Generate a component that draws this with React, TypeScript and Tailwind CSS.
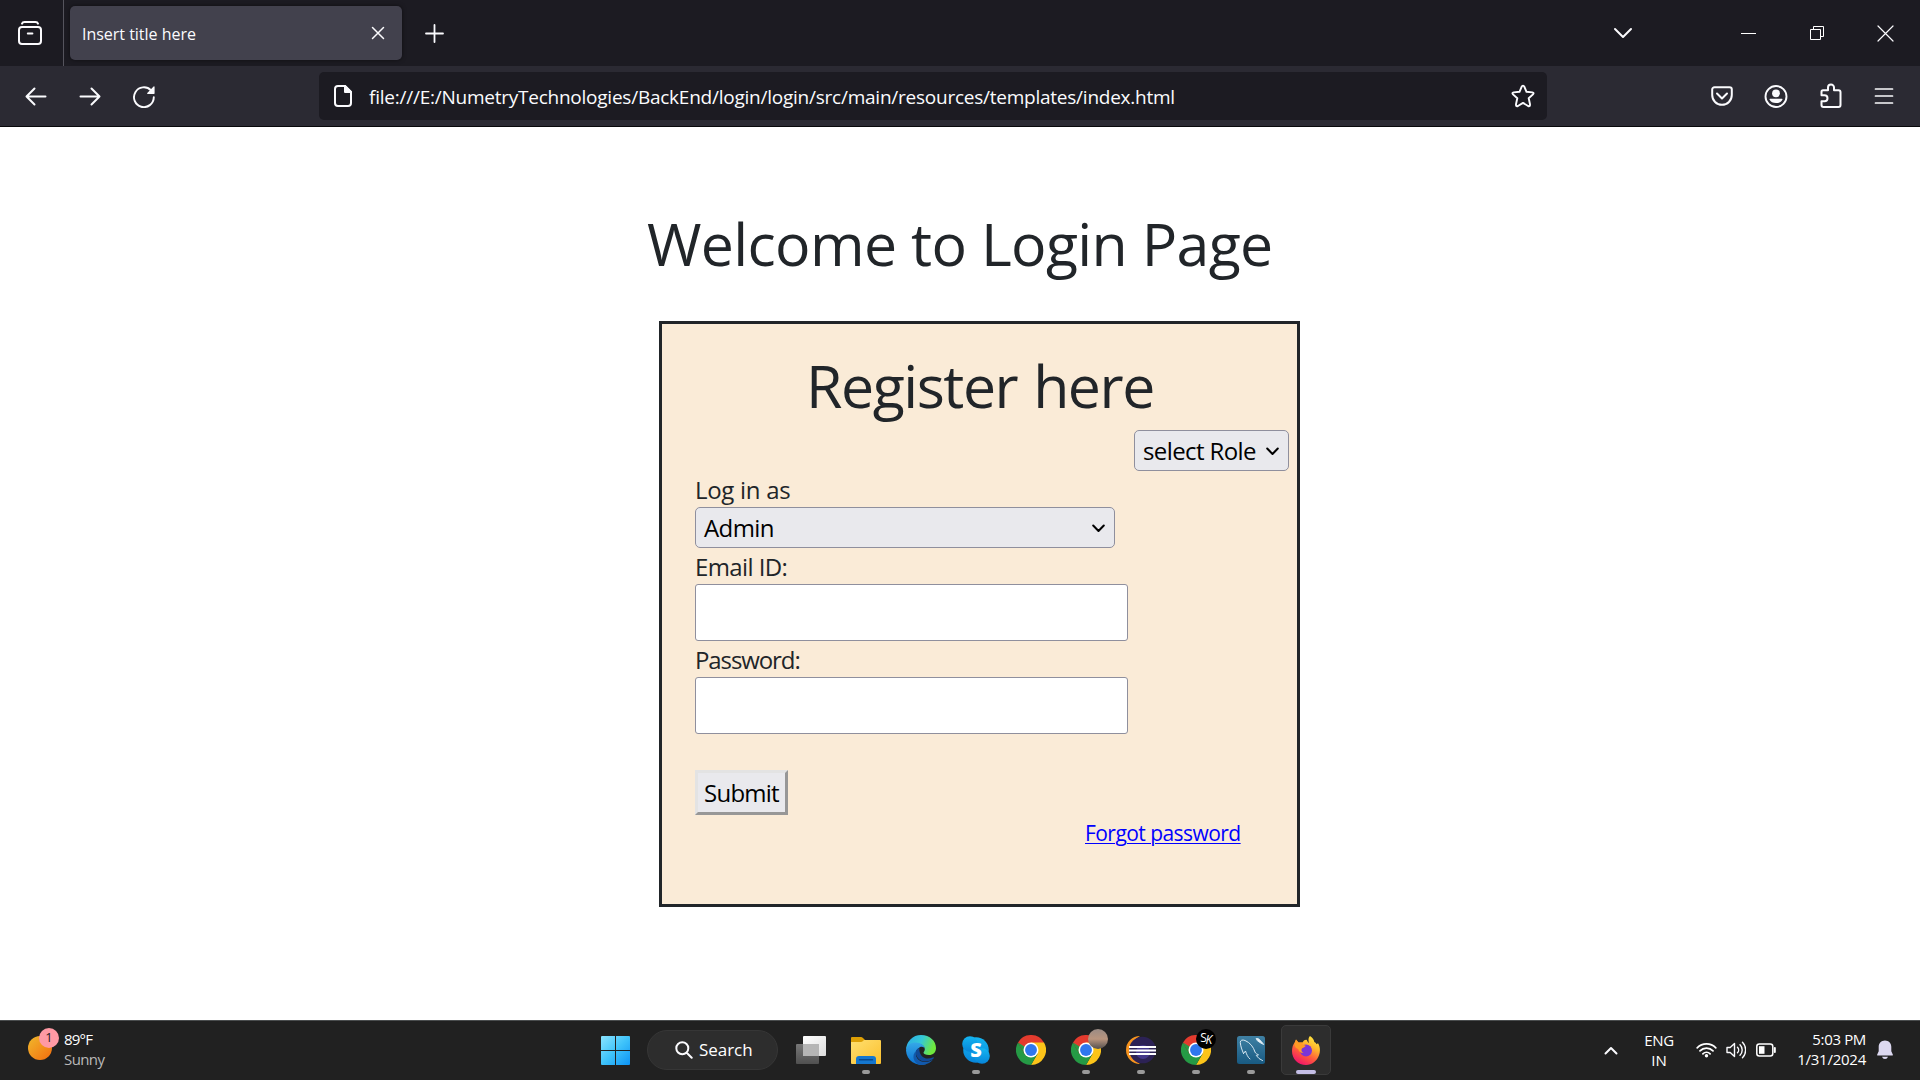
import React, { ReactNode } from 'react';

function Cell({ w, children }: { w: string; children: ReactNode }) {
  return <div className={`flex h-full shrink-0 items-center justify-center ${w}`}>{children}</div>;
}

function Line({ w, h, d, sw = 2 }: { w: number; h: number; d: string; sw?: number }) {
  return (
    <svg width={w} height={h} viewBox={`0 0 ${w} ${h}`} fill="none" stroke="#fbfbfe" strokeWidth={sw} strokeLinecap="round" strokeLinejoin="round">
      <path d={d} />
    </svg>
  );
}

function TabStrip() {
  return (
    <div className="flex h-[66px] items-center bg-[#1c1b22]">
      <div className="flex h-full w-16 items-center border-r border-[#55545d] pl-[18px]">
        <svg width="24" height="24" viewBox="0 0 24 24" fill="none" stroke="#fbfbfe" strokeWidth="2" strokeLinecap="round">
          <rect x="1" y="6" width="22" height="17" rx="3" />
          <path d="M9.8 12.6h4.6M4 2.6Q4.6 1 6.5 1h11Q19.400 1 20 2.600" />
        </svg>
      </div>
      <div className="ml-1.5 flex h-[54px] w-[332px] items-center justify-between rounded-[5px] bg-[#42414d] pr-[17px] pl-3 shadow-[0_0_4px_rgba(0,0,0,0.5)]">
        <span className="pt-0.5 text-[16px] tracking-[-0.02px] text-[#fbfbfe]">Insert title here</span>
        <Line w={14} h={14} d="M1.500 1.500l11 11M12.500 1.500l-11 11" sw={1.5} />
      </div>
      <Cell w="w-[65px]"><Line w={19} h={19} d="M9.500 1v17M1 9.500h17" sw={1.8} /></Cell>
      <div className="ml-auto flex h-full">
        <div className="mr-[63px] h-full"><Cell w="w-[54px]"><Line w={20} h={12} d="M2 2l8 8 8-8" /></Cell></div>
        <Cell w="w-[69px]"><div className="ml-px h-px w-[15px] bg-white" /></Cell>
        <Cell w="w-[69px]">
          <svg width="14" height="14" viewBox="0 0 14 14" fill="none" stroke="#fff">
            <path d="M.5 3.500h10v10H.5zM3.500 3.500v-3h10v10h-3" />
          </svg>
        </Cell>
        <Cell w="w-[69px]"><Line w={17} h={17} d="M1 1l15 15M16 1l-15 15" sw={1.2} /></Cell>
      </div>
    </div>
  );
}

function Toolbar() {
  return (
    <div className="flex h-[61px] items-center border-b border-[#08080b] bg-[#2b2a33] pl-[9px]">
      <Cell w="w-[54px]"><Line w={22} h={20} d="M20.500 10.500H1.500M9.500 2.500l-8 8 8 8" /></Cell>
      <Cell w="w-[54px]"><Line w={22} h={20} d="M1.500 10.500h19M12.500 2.500l8 8-8 8" /></Cell>
      <Cell w="w-[54px]">
        <svg width="24" height="24" viewBox="0 0 24 24" fill="none" stroke="#fbfbfe" strokeWidth="1.9" strokeLinecap="round" strokeLinejoin="round">
          <path d="M21.800 13.300A9.900 9.900 0 1 1 19 6.300" />
          <path d="M22 3v6.300h-6.300z" fill="#fbfbfe" stroke="#fbfbfe" strokeWidth="1.200" />
        </svg>
      </Cell>
      <div className="ml-[148px] flex h-12 w-[1228px] items-center rounded-[5px] bg-[#1c1b22] pr-3 pl-[15px]">
        <svg width="18" height="22" viewBox="0 0 18 22" fill="none" stroke="#fbfbfe" strokeWidth="2" strokeLinejoin="round">
          <path d="M4 1h7l6 6v11a3 3 0 0 1-3 3H4a3 3 0 0 1-3-3V4a3 3 0 0 1 3-3z" />
          <path d="M11 1v6h6z" fill="#fbfbfe" />
        </svg>
        <span className="ml-[17px] flex-1 pt-0.5 text-[19px] tracking-[-0.24px] text-[#fbfbfe]">
          file:///E:/NumetryTechnologies/BackEnd/login/login/src/main/resources/templates/index.html
        </span>
        <Line w={24} h={24} d="M12 1.600Q12.900 1.600 13.300 2.600L15.500 7.800 21.300 8.400Q23.400 8.900 22 10.400L17.700 14.300 19 20.300Q19.200 22.800 17.100 22L12 18.900 6.900 22Q4.800 22.800 5 20.300L6.300 14.300 2 10.400Q.6 8.900 2.700 8.400L8.500 7.800 10.700 2.600Q11.100 1.600 12 1.600z" sw={1.9} />
      </div>
      <div className="ml-[148px] flex h-full">
        <Cell w="w-[54px]"><Line w={22} h={20} d="M3.500 1.200h15a2.300 2.300 0 0 1 2.300 2.300V9a9.800 9.800 0 0 1-19.600 0V3.500A2.300 2.300 0 0 1 3.500 1.200zM6 7.500l5 5 5-5" /></Cell>
        <Cell w="w-[54px]">
          <svg width="24" height="24" viewBox="0 0 24 24" fill="#fbfbfe">
            <circle cx="12" cy="12.500" r="10.500" fill="none" stroke="#fbfbfe" strokeWidth="1.900" />
            <circle cx="12" cy="9.300" r="3.900" />
            <path d="M6 14.800h12q.8 0 .5.700c-1 2.300-3.500 3.600-6.500 3.600S6.500 17.800 5.500 15.500q-.3-.7.5-.7z" />
          </svg>
        </Cell>
        <Cell w="w-[55px]"><Line w={22} h={26} d="M1.500 8.800Q1.500 7.300 3 7.300H8V4.500a3 3 0 0 1 6 0V7.300H18.500Q20.500 7.300 20.500 9.300V22Q20.500 24 18.500 24H3.500Q1.500 24 1.500 22V18.200H4.500a3 3 0 0 0 0-6H1.500z" /></Cell>
        <Cell w="w-[52px]"><Line w={20} h={18} d="M1.500 2h17M1.500 9h17M1.500 16h17" sw={1.7} /></Cell>
      </div>
    </div>
  );
}

function Select({ text, cls, textCls }: { text: string; cls: string; textCls: string }) {
  return (
    <div className={`flex h-[41px] items-center justify-between rounded-[5px] border border-[#8f8f9d] bg-[#e9e9ed] text-[24px] leading-[36px] text-black ${cls}`}>
      <span className={textCls}>{text}</span>
      <svg className="mt-0.5" width="13" height="9" viewBox="0 0 13 9" fill="none" stroke="#000" strokeWidth="2" strokeLinecap="round" strokeLinejoin="round">
        <path d="M1.200 1.500l5.300 5.500 5.300-5.500" />
      </svg>
    </div>
  );
}

function LoginPage() {
  return (
    <main className="h-[893px] bg-white pt-20 text-[#212529]">
      <h1 className="ml-[647px] h-[72px] text-[59px] leading-[72px] tracking-[-0.66px] whitespace-nowrap">Welcome to Login Page</h1>
      <section className="mt-[42px] ml-[659px] flex h-[586px] w-[641px] flex-col border-3 border-[#212529] bg-[#faebd7] pt-[25px] pl-[33px]">
        <h1 className="ml-[111px] h-[72px] text-[59px] leading-[72px] tracking-[-1.45px] whitespace-nowrap [word-spacing:2px]">Register here</h1>
        <Select text="select Role" cls="mt-[9px] mr-[8px] w-[155px] self-end pr-[9px] pl-2" textCls="tracking-[-0.6px] whitespace-nowrap" />
        <label className="h-9 pt-px text-[24px] leading-[36px] tracking-[-0.3px]">Log in as</label>
        <Select text="Admin" cls="w-[420px] pr-[9px] pl-2" textCls="tracking-[-0.6px]" />
        <label className="h-9 pt-px text-[24px] leading-[36px] tracking-[-0.6px]">Email ID:</label>
        <input className="h-[57px] w-[433px] rounded-[3px] border border-[#8f8f9d] bg-white px-2 text-[24px]" />
        <label className="h-9 pt-px text-[24px] leading-[36px] tracking-[-1.1px]">Password:</label>
        <input type="password" className="h-[57px] w-[433px] rounded-[3px] border border-[#8f8f9d] bg-white px-2 text-[24px]" />
        <button className="mt-9 h-[45px] w-[93px] border-3 border-t-[#e3e3e3] border-r-[#979797] border-b-[#979797] border-l-[#e3e3e3] bg-[#e9e9ed] text-[24px] leading-[36px] tracking-[-0.77px] text-black">Submit</button>
        <a href="#" className="mt-0.5 ml-[390px] h-8 text-[21px] leading-[32px] tracking-[-0.55px] text-[#0000ff] underline decoration-1 underline-offset-2">Forgot password</a>
      </section>
    </main>
  );
}

function Chrome() {
  return (
    <svg width="30" height="30" viewBox="0 0 48 48">
      <path d="M24 24L3.200 12A24 24 0 0 1 44.800 12z" fill="#e33b2e" />
      <path d="M24 12H44.800A24 24 0 0 1 24 48L34.400 30z" fill="#fcc419" />
      <path d="M3.200 12A24 24 0 0 0 24 48L34.400 30 13.600 30z" fill="#259a45" />
      <path d="M3.200 12L13.600 30 24 24V12z" fill="#e33b2e" />
      <path d="M3.200 12L13.600 30 16 20z" fill="#259a45" />
      <circle cx="24" cy="24" r="12" fill="#fff" />
      <circle cx="24" cy="24" r="9.500" fill="#2f77ee" />
    </svg>
  );
}

function TaskIcon({ children, mark = true, active = false }: { children: ReactNode; mark?: boolean; active?: boolean }) {
  return (
    <div className="relative flex h-full w-[55px] items-center justify-center">
      {active && <div className="absolute top-[4px] left-[3px] h-[50px] w-[50px] rounded-[5px] border border-[#3a3a3a] bg-[#2d2d2d]" />}
      <div className="relative">{children}</div>
      {mark && <div className={active ? 'absolute bottom-[5px] h-1 w-5 rounded-full bg-[#c4bee6]' : 'absolute bottom-[5px] h-1 w-2 rounded-full bg-[#9a9a9a]'} />}
    </div>
  );
}

function Taskbar() {
  return (
    <footer className="flex h-[60px] items-center border-t border-[#4a4d4e] bg-[#212121] pb-px text-white">
      <div className="flex h-full w-[588px] items-center pl-7">
        <div className="relative -mt-1 h-6 w-6 rounded-full bg-linear-to-br from-[#eeb82c] to-[#f26a0c]">
          <div className="absolute -top-[8px] left-[11px] flex h-5 w-5 items-center justify-center rounded-full bg-[#ff99a4] text-[13px] text-[#2a1a1c]">1</div>
        </div>
        <div className="ml-3 flex flex-col pb-[3px] text-[15px] leading-[20px]">
          <span className="tracking-[-0.8px]">89°F</span>
          <span className="tracking-[-0.6px] text-[#b9b9b9]">Sunny</span>
        </div>
      </div>
      <Cell w="w-[55px]">
        <svg width="29" height="29" viewBox="0 0 29 29">
          <defs>
            <linearGradient id="win" x1="0" y1="0" x2="29" y2="29" gradientUnits="userSpaceOnUse">
              <stop stopColor="#8be4ff" /><stop offset=".5" stopColor="#3fc3fa" /><stop offset="1" stopColor="#0c93f5" />
            </linearGradient>
          </defs>
          <path fill="url(#win)" d="M1 0h13v14H0V1q0-1 1-1zM15 0h13q1 0 1 1v13H15zM0 15h14v14H1q-1 0-1-1zM15 15h14v13q0 1-1 1H15z" />
        </svg>
      </Cell>
      <div className="ml-1 flex h-10 w-[131px] items-center rounded-full border border-[#363636] bg-[#2d2d2d] pl-[27px]">
        <Line w={18} h={18} d="M13.300 7.300a6 6 0 1 1-12 0a6 6 0 1 1 12 0M11.700 11.700l5 5" />
        <span className="ml-1.5 text-[17px] tracking-[-0.05px]">Search</span>
      </div>
      <div className="ml-1.5 h-full">
        <Cell w="w-[54px]">
          <svg width="30" height="28" viewBox="0 0 30 28">
            <defs>
              <linearGradient id="tv1" x1="0" y1="0" x2="1" y2="1"><stop stopColor="#fff" /><stop offset="1" stopColor="#dcdcdc" /></linearGradient>
              <linearGradient id="tv2" x1="0" y1="0" x2="0" y2="1"><stop stopColor="#777" /><stop offset="1" stopColor="#505050" /></linearGradient>
            </defs>
            <rect y="8" width="23" height="20" rx="1" fill="url(#tv2)" />
            <rect x="7" width="23" height="20" rx="1" fill="url(#tv1)" />
            <path d="M7 8h16v12H7z" fill="#b5b5b5" />
          </svg>
        </Cell>
      </div>
      <div className="flex h-full">
        <TaskIcon>
          <svg width="30" height="27" viewBox="0 0 30 27">
            <defs><linearGradient id="fo" x1="0" y1="0" x2="1" y2="1"><stop stopColor="#ffdf70" /><stop offset="1" stopColor="#fbc02d" /></linearGradient></defs>
            <path d="M1 0h9q1 0 2 1l2 2v6H0V1q0-1 1-1z" fill="#dd9f05" />
            <path d="M0 5h10q1 0 2-1l1-1h16q1 0 1 1v22q0 1-1 1H1q-1 0-1-1z" fill="url(#fo)" />
            <path d="M5 27v-5q0-3 3-3h14q3 0 3 3v5z" fill="#1577cf" />
            <path d="M8.500 22.800h13" stroke="#08498e" strokeWidth="1.500" strokeLinecap="round" />
          </svg>
        </TaskIcon>
        <TaskIcon mark={false}>
          <svg width="30" height="30" viewBox="0 0 30 30">
            <defs>
              <linearGradient id="ed" x1="0" y1="0" x2="1" y2=".3"><stop stopColor="#2aa9e8" /><stop offset=".55" stopColor="#35c9d6" /><stop offset="1" stopColor="#6fe83e" /></linearGradient>
              <linearGradient id="ed2" x1="0" y1="0" x2="0" y2="1"><stop stopColor="#35a8e8" /><stop offset="1" stopColor="#0a6fd0" /></linearGradient>
            </defs>
            <path d="M0 15A15 15 0 0 1 15 0C24 0 30 6 30 13c0 4.500-3 7-7 7-3.500 0-5.500-1-5.500-2.200 0-1 1.300-1.500 1.300-3.600C18.800 11 16 9 12 9 6 9 1 12 0 15z" fill="url(#ed)" />
            <path d="M0 15.500C.5 10 5 7.500 9.500 7.500c5.500 0 9.300 3 9.300 6.700 0-2-2.600-3.200-5-2-3 1.500-5.300 5.500-3.800 9.800C11.500 26.500 16 29 20 29A15 15 0 0 1 0 15.500z" fill="url(#ed2)" />
            <path d="M9.700 16.500c-.8 6 3.500 10.500 9.300 10.500 4 0 7-1.300 9-3.800a15 15 0 0 1-12.500 6.700C10 29.500 7 25 7.500 21c.2-2 1-3.500 2.200-4.500z" fill="#1259ac" />
            <path d="M9.700 16.500C9.500 22 13.500 26.500 19 26.500c3.500 0 6.500-1.200 8.300-2.700 1-.9.400-1.800-.6-1.300C19.500 25.500 13 22 13.300 13c-2 .5-3.300 2-3.600 3.500z" fill="#114a97" />
          </svg>
        </TaskIcon>
        <TaskIcon>
          <svg width="28" height="28" viewBox="0 0 28 28">
            <defs><linearGradient id="sk" x1="0" y1="0" x2="0" y2="1"><stop stopColor="#14b5f1" /><stop offset="1" stopColor="#0785da" /></linearGradient></defs>
            <g fill="url(#sk)"><circle cx="14" cy="14" r="12.800" /><circle cx="8" cy="8" r="7.800" /><circle cx="20" cy="20" r="7.800" /></g>
            <text x="14" y="20.500" textAnchor="middle" fontFamily="Open Sans" fontWeight="800" fontSize="20" fill="#fff">S</text>
          </svg>
        </TaskIcon>
        <TaskIcon mark={false}><Chrome /></TaskIcon>
        <TaskIcon>
          <Chrome />
          <div className="absolute -top-[6px] left-[17px] h-5 w-5 rounded-full bg-linear-to-b from-[#9a8b84] via-[#b9957e] to-[#54504e]" />
        </TaskIcon>
        <TaskIcon>
          <svg width="30" height="28" viewBox="0 0 30 28">
            <path d="M14 0A14 14 0 0 0 14 28A16 16 0 0 1 14 0z" fill="#f7941e" />
            <circle cx="16.500" cy="14" r="13.300" fill="#2c2255" />
            <circle cx="17" cy="16" r="7" fill="#43378a" />
            <path d="M3 11h27M3 14.500h27M3 18h27" stroke="#fff" strokeWidth="1.900" />
          </svg>
        </TaskIcon>
        <TaskIcon>
          <Chrome />
          <div className="absolute -top-[6px] left-[15px] flex h-5 w-5 items-center justify-center rounded-full bg-black text-[12px] tracking-[-1.5px] text-white">
            <span className="-mt-0.5">S</span><span className="mt-0.5 italic">K</span>
          </div>
        </TaskIcon>
        <TaskIcon>
          <svg width="28" height="28" viewBox="0 0 28 28" fill="none" stroke="#d8e8f2" strokeWidth="1" strokeLinecap="round" strokeLinejoin="round">
            <defs><linearGradient id="my" x1="0" y1="0" x2="0" y2="1"><stop stopColor="#3f80a3" /><stop offset="1" stopColor="#185a82" /></linearGradient></defs>
            <rect width="28" height="28" rx="2.500" fill="url(#my)" stroke="none" />
            <path d="M6.500 17.500C5 14 3.500 10 3.300 6.500 3.300 4 5.500 3.500 8 4.500c5 2 8.500 6.500 10 11.500.5 1.500 2 2 3.500 2.800L19.300 19.500 22 22.500l3.500 2M6.500 17.500l2-2.500c1 3 2 6 4.500 8" />
            <path d="M19.500 2.500l2 .2 3 3 2.200 2.800-3-1.500-3-2z" fill="#eef5fa" />
          </svg>
        </TaskIcon>
        <TaskIcon active>
          <svg width="28" height="29" viewBox="0 0 28 29">
            <defs>
              <linearGradient id="fx" x1=".85" y1="0" x2=".3" y2="1"><stop stopColor="#fff044" /><stop offset=".35" stopColor="#ffb52c" /><stop offset=".65" stopColor="#ff5a3c" /><stop offset="1" stopColor="#f0126c" /></linearGradient>
            </defs>
            <path d="M18 0c3 2 4 4 4.300 6 1.400.5 2 1.500 2.200 2.300l1.500-1c2.200 3.200 2.500 8 1 12C25 25 20 29 14 29 6 29 0 23 0 15c0-3.500 1-6.500 3-8.700L4 3.500 6.500 6.500h4C11.500 4.500 13 3.800 14 3.800c1.500 0 1 2.200 3 3.200C16 4 16.500 1.500 18 0z" fill="url(#fx)" />
            <circle cx="14" cy="14.500" r="6" fill="#7a35d8" />
            <path d="M2.500 7L4 3.500 6.500 6.500h4.500C9.500 7.500 10 9 13.500 9.500c0 2-3 2-3.800 3.500-.7 1.500.3 3.500 2 4-2 .5-5-1-5.500-4C3 12 2.500 9 2.500 7z" fill="#ff9a24" />
          </svg>
        </TaskIcon>
      </div>
      <div className="ml-[263px] flex h-full items-center">
        <Cell w="w-[30px]"><Line w={14} h={9} d="M1.500 7.500L7 2l5.500 5.500" /></Cell>
        <div className="ml-[7px] flex w-[52px] flex-col items-center pb-px text-[15px] leading-[20px]">
          <span className="tracking-[-0.3px]">ENG</span><span>IN</span>
        </div>
        <div className="ml-1.5 h-full">
          <Cell w="w-[30px]">
            <svg width="21" height="16" viewBox="0 0 21 16" fill="none" stroke="#fff" strokeWidth="1.700" strokeLinecap="round">
              <path d="M1.200 5.800a13 13 0 0 1 18.600 0M4 8.900a9 9 0 0 1 13 0M6.900 11.800a5 5 0 0 1 7.200 0" />
              <circle cx="10.500" cy="13.800" r="1.700" fill="#fff" stroke="none" />
            </svg>
          </Cell>
        </div>
        <Cell w="w-[30px]"><Line w={20} h={18} d="M1 6.500h3.200L8.500 2.500v13L4.200 11.500H1zM11.500 6.200a4 4 0 0 1 0 5.600M14 3.700a7.500 7.500 0 0 1 0 10.600M16.500 1.300a11 11 0 0 1 0 15.400" sw={1.4} /></Cell>
        <Cell w="w-[30px]">
          <svg width="20" height="14" viewBox="0 0 20 14" fill="none" stroke="#fff" strokeWidth="1.500">
            <rect x=".8" y="1" width="16" height="12" rx="2.500" />
            <rect x="3" y="3.200" width="5.500" height="7.600" fill="#fff" stroke="none" />
            <path d="M18.800 5v4" strokeWidth="2" strokeLinecap="round" />
          </svg>
        </Cell>
        <div className="flex w-[85px] flex-col items-end pb-[3px] text-[15px] leading-[20px]">
          <span className="tracking-[-0.35px]">5:03 PM</span>
          <span className="tracking-[-0.25px]">1/31/2024</span>
        </div>
        <div className="ml-1 h-full">
          <Cell w="w-[30px]">
            <svg width="16" height="20" viewBox="0 0 16 20" fill="#dcd8f0">
              <path d="M8 .5c3.700 0 6.300 2.800 6.300 6.300v4.400l1.500 3.300q.3 1-.8 1H1q-1.100 0-.8-1l1.500-3.300V6.800C1.700 3.300 4.300.5 8 .5zM5 16.800h6q-.7 2.200-3 2.200t-3-2.200z" />
            </svg>
          </Cell>
        </div>
      </div>
    </footer>
  );
}

export default function App() {
  return (
    <div className="flex h-[1080px] w-[1920px] flex-col overflow-hidden bg-white font-['Open_Sans','Noto_Sans',sans-serif]">
      <TabStrip />
      <Toolbar />
      <LoginPage />
      <Taskbar />
    </div>
  );
}
